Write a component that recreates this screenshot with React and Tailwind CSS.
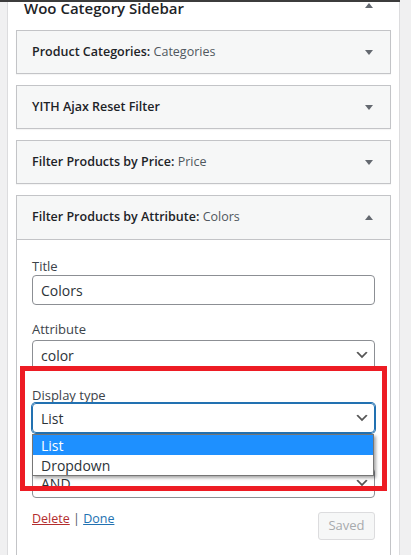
import React from "react";

const Chevron = () => (
  <svg width="16" height="16" viewBox="0 0 20 20" className="shrink-0">
    <path d="M5 6l5 5 5-5 2 1-7 7-7-7 2-1z" fill="#555" />
  </svg>
);

const Tri = ({ up = false }) => (
  <svg width="8" height="5" viewBox="0 0 8 5" className="shrink-0">
    <polygon points={up ? "4,0 8,5 0,5" : "0,0 8,0 4,5"} fill="#646970" />
  </svg>
);

const Widget = ({ title, sub }) => (
  <div className="mb-[11px] flex h-[44px] items-center justify-between border border-[#c3c4c7] bg-[#f6f7f7] pl-[15px] pr-[17px] shadow-[0_1px_1px_rgba(0,0,0,0.04)]">
    <h3 className="text-[12.5px] font-semibold text-[#1d2327]">
      {title}
      {sub && <span className="font-normal text-[#50575e]"> {sub}</span>}
    </h3>
    <Tri />
  </div>
);

const Field = ({ label, children, className = "" }) => (
  <div className={className}>
    <p className="text-[13px] leading-[18px] text-[#3c434a]">{label}</p>
    {children}
  </div>
);

const Select = ({ value, focused = false, className = "" }) => (
  <div
    className={
      "flex h-[30px] items-center justify-between rounded-[4px] border pl-2 pr-[4px] text-[14px] text-[#2c3338] " +
      (focused
        ? "border-[#2271b1] shadow-[0_0_0_1px_#2271b1] "
        : "border-[#8c8f94] ") +
      className
    }
  >
    <span>{value}</span>
    <Chevron />
  </div>
);

export default function App() {
  return (
    <div className="relative h-[555px] w-[411px] overflow-hidden bg-[#f0f0f1] font-['Open_Sans',sans-serif]">
      <div className="h-[2px] w-[400px] bg-[#3c3c3c]" />

      <div className="ml-[7px] w-[393px] border-x border-[#dcdcde] bg-white px-2 pb-[40px]">
        {/* sidebar title */}
        <div className="flex h-[28px] justify-between pl-2 pr-[18px]">
          <h2 className="-mt-[4px] text-[15px] leading-[20px] font-semibold text-[#1d2327]">
            Woo Category Sidebar
          </h2>
          <div className="mt-[1px]">
            <Tri up />
          </div>
        </div>

        <Widget title="Product Categories:" sub="Categories" />
        <Widget title="YITH Ajax Reset Filter" />
        <Widget title="Filter Products by Price:" sub="Price" />

        {/* open widget */}
        <div className="border border-[#c3c4c7] bg-white">
          <div className="flex h-[44px] items-center justify-between border-b border-[#c3c4c7] bg-[#f6f7f7] pl-[15px] pr-[17px]">
            <h3 className="text-[12.5px] font-semibold text-[#1d2327]">
              Filter Products by Attribute:
              <span className="font-normal text-[#50575e]"> Colors</span>
            </h3>
            <Tri up />
          </div>

          <div className="px-[15px] pt-[17px] pb-[30px]">
            <Field label="Title">
              <div className="flex h-[30px] items-center rounded-[4px] border border-[#8c8f94] px-2 text-[14px] text-[#2c3338]">
                Colors
              </div>
            </Field>

            <Field label="Attribute" className="mt-[15px]">
              <Select value="color" className="mt-[2px]" />
            </Field>

            <Field label="Display type" className="mt-[16px]">
              <div className="relative -mt-[1px]">
                <Select value="List" focused />
                {/* native dropdown popup */}
                <div className="absolute left-0 top-[31px] z-10 w-[342px] border border-[#767676] bg-white text-[14px] text-[#2c3338] shadow-[2px_2px_3px_rgba(0,0,0,0.35)]">
                  <div className="flex h-[20px] items-center bg-[#1e90ff] px-2 text-white">
                    List
                  </div>
                  <div className="flex h-[20px] items-center px-2">Dropdown</div>
                </div>
              </div>
            </Field>

            <Field label="Query type" className="mt-[15px]">
              <Select value="AND" className="mt-[2px]" />
            </Field>

            <div className="mt-[12px] flex items-start justify-between">
              <p className="text-[12.5px] leading-[18px] text-[#50575e]">
                <a className="text-[#b32d2e] underline">Delete</a>
                {" | "}
                <a className="text-[#2271b1] underline">Done</a>
              </p>
              <button className="mt-[2px] flex h-[28px] w-[57px] items-center justify-center rounded-[3px] border border-[#dcdcde] bg-[#f6f7f7] text-[13px] text-[#a7aaad]">
                Saved
              </button>
            </div>
          </div>
        </div>
      </div>

      {/* red annotation frame */}
      <div className="absolute left-[20px] top-[366px] h-[125px] w-[367px] border-[5px] border-[#ed1c24]" />
    </div>
  );
}
